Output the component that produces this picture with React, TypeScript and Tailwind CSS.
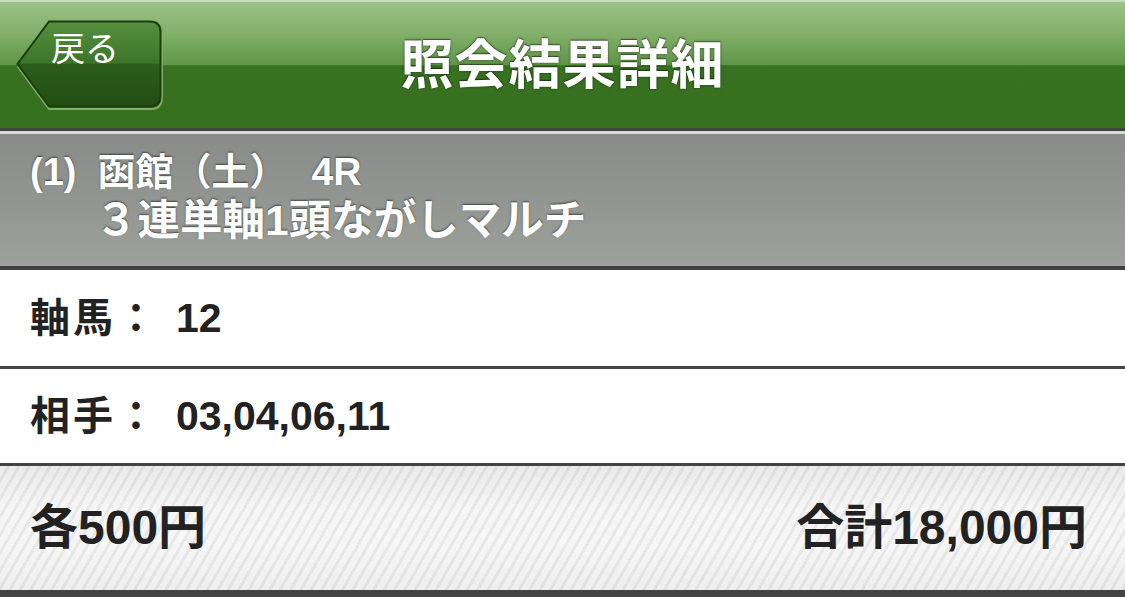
import React from "react";

const font = "font-['Liberation_Sans','Noto_Sans_CJK_JP',sans-serif]";

function BackButton() {
  return (
    <div className="relative w-[148px] h-[90px] cursor-pointer">
      <svg className="absolute inset-0" width="148" height="90" viewBox="0 0 148 90">
        <defs>
          <linearGradient id="backFill" x1="0" y1="0" x2="0" y2="1">
            <stop offset="0" stopColor="#54903f" />
            <stop offset="0.49" stopColor="#3d7528" />
            <stop offset="0.5" stopColor="#2c5e1b" />
            <stop offset="1" stopColor="#224e14" />
          </linearGradient>
        </defs>
        <path d="M33 3 H135 Q146 3 146 14 V77 Q146 89 135 89 H33 L2 47 Z" fill="none" stroke="#7fae64" strokeWidth="2" />
        <path d="M33 1.5 H134 Q144.5 1.5 144.5 12 V76 Q144.5 86.5 134 86.5 H33 L1.5 44 Z" fill="url(#backFill)" stroke="#1a3c0e" strokeWidth="2" />
      </svg>
      <span className="relative block pl-[35px] pt-[8px] text-[34px] leading-[38px] text-white font-normal font-['Noto_Sans_CJK_JP',sans-serif]">
        戻る
      </span>
    </div>
  );
}

function InfoRow({ label, value, height }: { label: string; value: string; height: string }) {
  return (
    <div className={`${height} flex items-center pl-[30px] bg-white border-b-[3px] border-[#434343]`}>
      <span className="text-[40px] leading-[46px] font-bold text-[#222] tracking-[3px]">{label}</span>
      <span className="ml-[17px] text-[41px] leading-[46px] font-bold text-[#222]">{value}</span>
    </div>
  );
}

export default function App() {
  return (
    <div className={`w-[1125px] h-[597px] overflow-hidden bg-white ${font}`}>
      {/* header */}
      <div className="h-[128px] border-t-[2px] border-[#c6e0b6] bg-[linear-gradient(to_bottom,#9dc189_0%,#82b06a_25%,#5f9546_50%,#387221_50.5%,#35701f_100%)] grid grid-cols-[1fr_auto_1fr] items-center">
        <div className="pl-[16px] pt-[18px] self-start">
          <BackButton />
        </div>
        <h1 className="text-[53px] leading-[60px] font-bold text-white tracking-[1px] [text-shadow:0_0_3px_rgba(0,0,0,0.45),0_-1px_1px_rgba(0,0,0,0.4)] pt-[1px]">
          照会結果詳細
        </h1>
        <div />
      </div>
      <div className="h-[3px] bg-[#3d463a]" />
      <div className="h-[3px] bg-[#d5dad5]" />

      {/* race summary */}
      <div className="h-[136px] border-b-[4px] border-[#404040] bg-[linear-gradient(to_bottom,#888b88,#9ca19b)] pl-[30px] pt-[14px] text-white font-bold [text-shadow:0_-1px_2px_rgba(0,0,0,0.55)]">
        <div className="flex text-[38px] leading-[48px]">
          <span>(1)</span>
          <span className="ml-[21px]">函館（土）</span>
          <span className="ml-[24px] text-[39px]">4R</span>
        </div>
        <div className="pl-[65px] text-[42.5px] leading-[50px]">３連単軸1頭ながしマルチ</div>
      </div>

      <InfoRow label="軸馬：" value="12" height="h-[99px]" />
      <InfoRow label="相手：" value="03,04,06,11" height="h-[97px]" />

      {/* totals */}
      <div className="h-[131px] border-b-[7px] border-[#434343] flex items-center justify-between pl-[30px] pr-[38px] bg-[linear-gradient(to_bottom,rgba(0,0,0,0.05),rgba(255,255,255,0)_35%,rgba(255,255,255,0)_65%,rgba(0,0,0,0.03)),repeating-linear-gradient(120deg,#f6f6f6_0px,#f6f6f6_6px,#e8e8e8_6px,#e8e8e8_9px)]">
        <span className="text-[48px] leading-[56px] font-bold text-[#222]">各500円</span>
        <span className="text-[48px] leading-[56px] font-bold text-[#222]">合計18,000円</span>
      </div>
    </div>
  );
}
